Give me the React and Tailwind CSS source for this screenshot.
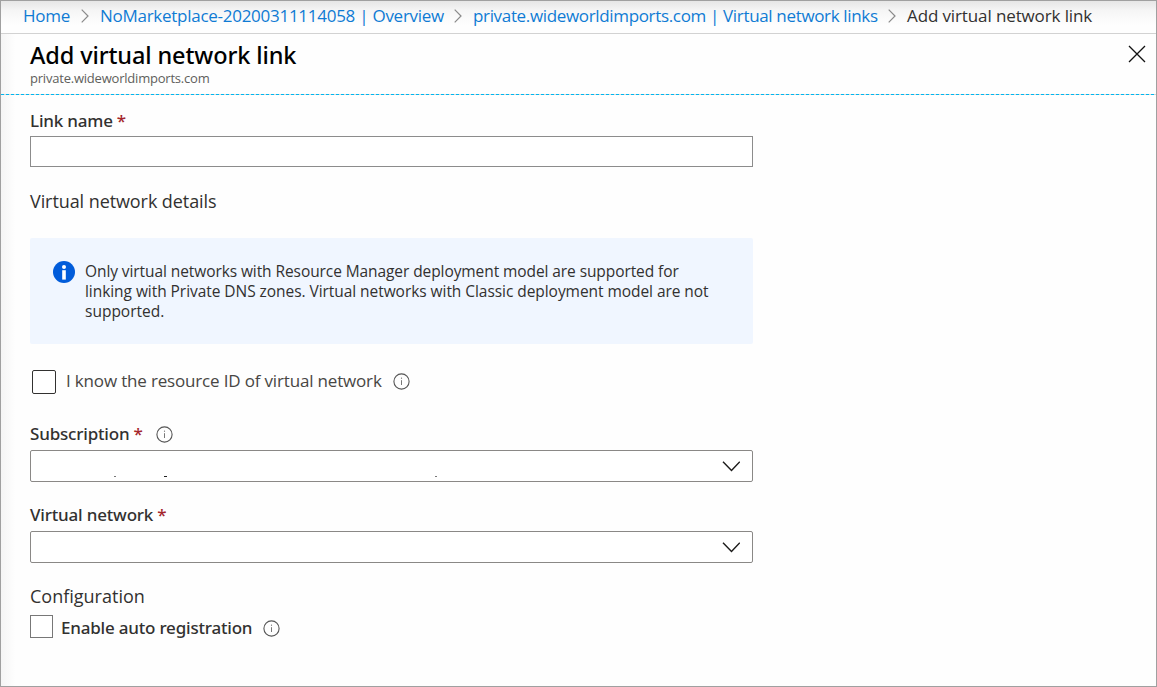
import React from 'react';

const REGULAR = "font-['Open_Sans','Noto_Sans',sans-serif]";
const MEDIUM = "font-['Noto_Sans','Open_Sans',sans-serif] font-medium";

function Separator({ className }) {
  return (
    <svg className={`shrink-0 ${className}`} width="8" height="14" viewBox="0 0 8 14" fill="none" stroke="#8a8a8a" strokeWidth="1.2">
      <path d="M.7 .7 L7 7 L.7 13.3" />
    </svg>
  );
}

function InfoOutline({ className }) {
  return (
    <svg className={`shrink-0 ${className}`} width="17" height="17" viewBox="0 0 17 17" fill="none" stroke="#555">
      <circle cx="8.5" cy="8.5" r="7.6" strokeWidth="1.1" />
      <path d="M8.5 7.2V12" strokeWidth="1" stroke="#777" />
      <path d="M8.5 4.6V5.8" strokeWidth="1.1" stroke="#777" />
    </svg>
  );
}

function Required() {
  return <span className="ml-[4px] text-[#a4262c]">*</span>;
}

function Select({ label, children }) {
  return (
    <div role="combobox" aria-label={label} aria-expanded="false" className="flex h-8 items-center justify-end rounded-[2px] border border-[#8a8886] bg-white pr-3">
      {children}
      <svg className="mt-px shrink-0" width="18" height="11" viewBox="0 0 18 11" fill="none" stroke="#1b1a19" strokeWidth="1.4">
        <path d="M1 .8 L9.5 9.6 L17.8 .8" />
      </svg>
    </div>
  );
}

export default function App() {
  return (
    <div className={`flex h-[687px] w-[1157px] flex-col overflow-hidden whitespace-nowrap border border-[#a0a0a0] bg-[linear-gradient(to_right,#f5f5f5,#fefefe_14px,#fefefe)] ${REGULAR}`}>
      <nav className="flex h-[33px] shrink-0 items-start border-b border-[#d2d2d2] bg-[linear-gradient(to_bottom,#e6e6e6,#f6f6f6_10px,#fefefe_24px)] pl-[22px] text-[17px] leading-[29px] text-[#0f7bd4]">
        <a className="flex w-[77px] items-center tracking-[-0.27px]">Home<Separator className="ml-auto mr-[11px]" /></a>
        <a className="flex w-[373px] items-center tracking-[-0.27px]">NoMarketplace-20200311114058 | Overview<Separator className="ml-auto mr-[11px]" /></a>
        <a className="flex w-[434px] items-center tracking-[-0.34px]">private.wideworldimports.com | Virtual network links<Separator className="ml-auto mr-[11px]" /></a>
        <span className="tracking-[-0.12px] text-[#323130]">Add virtual network link</span>
      </nav>

      <header className="flex h-[60px] shrink-0 justify-between pl-[29px] pr-[10px] pt-[6px]">
        <div>
          <h1 className={`text-[23.5px] leading-[30px] tracking-[-0.12px] text-black ${MEDIUM}`}>Add virtual network link</h1>
          <p className="text-[13px] leading-4 tracking-[-0.21px] text-[#605e5c]">private.wideworldimports.com</p>
        </div>
        <svg className="mt-[5px]" width="18" height="18" viewBox="0 0 18 18" fill="none" stroke="#111" strokeWidth="1.3">
          <path d="M1 1 L17 17 M17 1 L1 17" />
        </svg>
      </header>
      <div className="h-px shrink-0 bg-[repeating-linear-gradient(to_right,#00b7f1_0_3px,#d8d4d2_3px_5px)]" />

      <main className="ml-[29px] flex w-[723px] flex-col pt-4 text-[#323130]">
        <label className={`h-[25px] text-[17px] leading-5 tracking-[-0.2px] ${MEDIUM}`}>Link name<Required /></label>
        <div role="textbox" aria-label="Link name" className="h-[31px] border border-[#8c8c8c] bg-white" />

        <h2 className="mt-[23px] text-[18px] leading-[22px] tracking-[-0.08px]">Virtual network details</h2>
        <div className="mt-[26px] flex h-[106px] rounded-[2px] bg-[#f0f6ff] pl-[23px] pt-[23px]">
          <svg className="mr-[10px] shrink-0" width="22" height="22" viewBox="0 0 22 22">
            <circle cx="11" cy="11" r="11" fill="#015cda" />
            <circle cx="11" cy="6" r="2" fill="#fff" />
            <rect x="9.2" y="9.2" width="3.6" height="9.4" fill="#fff" />
          </svg>
          <p className="text-[15.5px] leading-5">
            <span className="tracking-[-0.085px]">Only virtual networks with Resource Manager deployment model are supported for</span><br />
            <span className="tracking-[-0.055px]">linking with Private DNS zones. Virtual networks with Classic deployment model are not</span><br />
            supported.
          </p>
        </div>

        <div className="mt-[26px] flex h-6 items-start pl-[2px]">
          <span role="checkbox" aria-checked="false" className="h-6 w-6 rounded-[2px] border border-[#323130] bg-white" />
          <span className="ml-[10px] text-[17px] leading-[22px] tracking-[-0.17px] text-[#484644]">I know the resource ID of virtual network</span>
          <InfoOutline className="ml-[11px] mt-[2.5px]" />
        </div>

        <div className={`mt-[30px] flex h-[26px] items-start text-[17px] leading-5 tracking-[-0.18px] ${MEDIUM}`}>
          Subscription<Required /><InfoOutline className="ml-[13px] mt-[2px]" />
        </div>
        <Select label="Subscription">
          <div className="mr-auto flex self-end pb-[4px]">
            <i className="ml-[83px] h-px w-[2px] bg-[#777]" />
            <i className="ml-12 h-px w-[3px] bg-[#222]" />
            <i className="ml-[268px] h-px w-[2px] bg-[#777]" />
          </div>
        </Select>

        <label className={`mt-[23px] h-[26px] text-[17px] leading-5 tracking-[-0.18px] ${MEDIUM}`}>Virtual network<Required /></label>
        <Select label="Virtual network" />

        <h2 className="mt-[22px] text-[18px] leading-[22px]">Configuration</h2>
        <div className="mt-2 flex h-[23px] items-start">
          <span role="checkbox" aria-checked="false" className="h-[23px] w-[23px] border border-[#777] bg-white" />
          <span className={`ml-[8px] mt-[3px] text-[17px] leading-5 tracking-[-0.2px] ${MEDIUM}`}>Enable auto registration</span>
          <InfoOutline className="ml-[11px] mt-[5px]" />
        </div>
      </main>
    </div>
  );
}
